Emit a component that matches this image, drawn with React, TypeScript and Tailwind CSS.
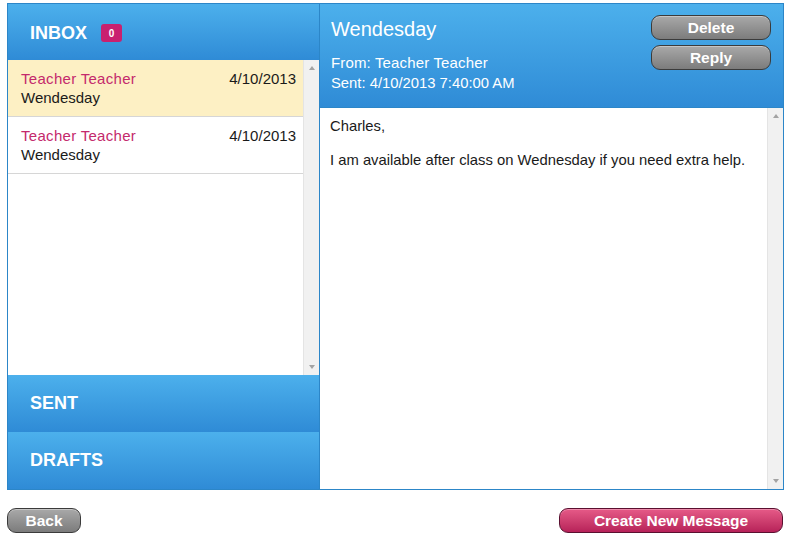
import React from 'react';

interface Message {
  id: number;
  from: string;
  subject: string;
  date: string;
}

const messages: Message[] = [
  { id: 1, from: 'Teacher Teacher', subject: 'Wendesday', date: '4/10/2013' },
  { id: 2, from: 'Teacher Teacher', subject: 'Wendesday', date: '4/10/2013' },
];

const font = { fontFamily: '"Liberation Sans", Arial, sans-serif' };

function ScrollBar() {
  return (
    <div className="w-[16px] h-full bg-[#f1f1f1] border-l border-[#e4e4e4] flex flex-col justify-between items-center py-[6px]">
      <span className="w-0 h-0 border-x-[3px] border-x-transparent border-b-[4px] border-b-[#a3a3a3]"></span>
      <span className="w-0 h-0 border-x-[3px] border-x-transparent border-t-[4px] border-t-[#a3a3a3]"></span>
    </div>
  );
}

function GrayButton({ label, className }: { label: string; className: string }) {
  return (
    <button
      className={`rounded-[9px] border border-[#3b3b3b] bg-gradient-to-b from-[#a9a9a9] to-[#7c7c7c] text-white font-bold text-[15.5px] leading-none shadow-[inset_0_1px_0_rgba(255,255,255,0.35)] ${className}`}
    >
      {label}
    </button>
  );
}

function FolderHeader({ label }: { label: string }) {
  return (
    <div className="h-[57px] bg-gradient-to-b from-[#4cb0ec] to-[#2f8bd6] flex items-center pl-[22px] text-white font-bold text-[18px]">
      {label}
    </div>
  );
}

export default function App() {
  return (
    <div className="w-[790px] h-[550px] bg-white pt-[3px]" style={font}>
      <div className="ml-[7px] w-[777px] h-[487px] border border-[#2c86c8] flex">
        {/* left column: folders */}
        <div className="w-[312px] flex flex-col border-r border-[#2c86c8]">
          <div className="h-[56px] bg-gradient-to-b from-[#4cb0ec] to-[#2f8bd6] flex items-center pl-[22px] pt-[2px] gap-[14px]">
            <span className="text-white font-bold text-[18px]">INBOX</span>
            <span className="bg-[#c9206f] text-white font-bold text-[10px] rounded-[3px] w-[21px] h-[18px] flex items-center justify-center">
              0
            </span>
          </div>
          <div className="flex-1 flex min-h-0">
            <div className="flex-1">
              {messages.map((m, i) => (
                <div
                  key={m.id}
                  className={`h-[57px] border-b border-[#d6d6d6] pl-[13px] pr-[7px] pt-[9px] flex justify-between text-[15px] leading-[19px] ${
                    i === 0 ? 'bg-[#fdf0c4]' : 'bg-white'
                  }`}
                >
                  <div>
                    <div className="text-[#c42a6c] tracking-[0.3px]">{m.from}</div>
                    <div className="text-[#1a1a1a]">{m.subject}</div>
                  </div>
                  <div className="text-[#1a1a1a]">{m.date}</div>
                </div>
              ))}
            </div>
            <ScrollBar />
          </div>
          <FolderHeader label="SENT" />
          <FolderHeader label="DRAFTS" />
        </div>

        {/* right column: reading pane */}
        <div className="flex-1 flex flex-col">
          <div className="h-[103px] bg-gradient-to-b from-[#4cb0ec] to-[#2f8bd6] flex justify-between pl-[11px] pr-[12px]">
            <div className="text-white pt-[14px]">
              <div className="text-[20px] leading-[22px]">Wendesday</div>
              <div className="text-[15px] leading-[21px] mt-[12px] tracking-[0.15px]">From: Teacher Teacher</div>
              <div className="text-[14.8px] leading-[20px]">Sent: 4/10/2013 7:40:00 AM</div>
            </div>
            <div className="flex flex-col gap-[5px] pt-[11px]">
              <GrayButton label="Delete" className="w-[120px] h-[25px]" />
              <GrayButton label="Reply" className="w-[120px] h-[25px]" />
            </div>
          </div>
          <div className="flex-1 flex min-h-0 border-t border-[#2c86c8]">
            <div className="flex-1 pl-[10px] pt-[10px] text-[14.8px] leading-[17px] text-[#1a1a1a]">
              <p>Charles,</p>
              <p className="mt-[17px]">I am available after class on Wednesday if you need extra help.</p>
            </div>
            <ScrollBar />
          </div>
        </div>
      </div>

      <div className="flex justify-between pl-[7px] pr-[7px] mt-[18px]">
        <GrayButton label="Back" className="w-[74px] h-[25px]" />
        <button className="w-[224px] h-[25px] rounded-[9px] border border-[#5a1030] bg-gradient-to-b from-[#e65a88] to-[#b72159] text-white font-bold text-[15.5px] leading-none shadow-[inset_0_1px_0_rgba(255,255,255,0.3)]">
          Create New Message
        </button>
      </div>
    </div>
  );
}
